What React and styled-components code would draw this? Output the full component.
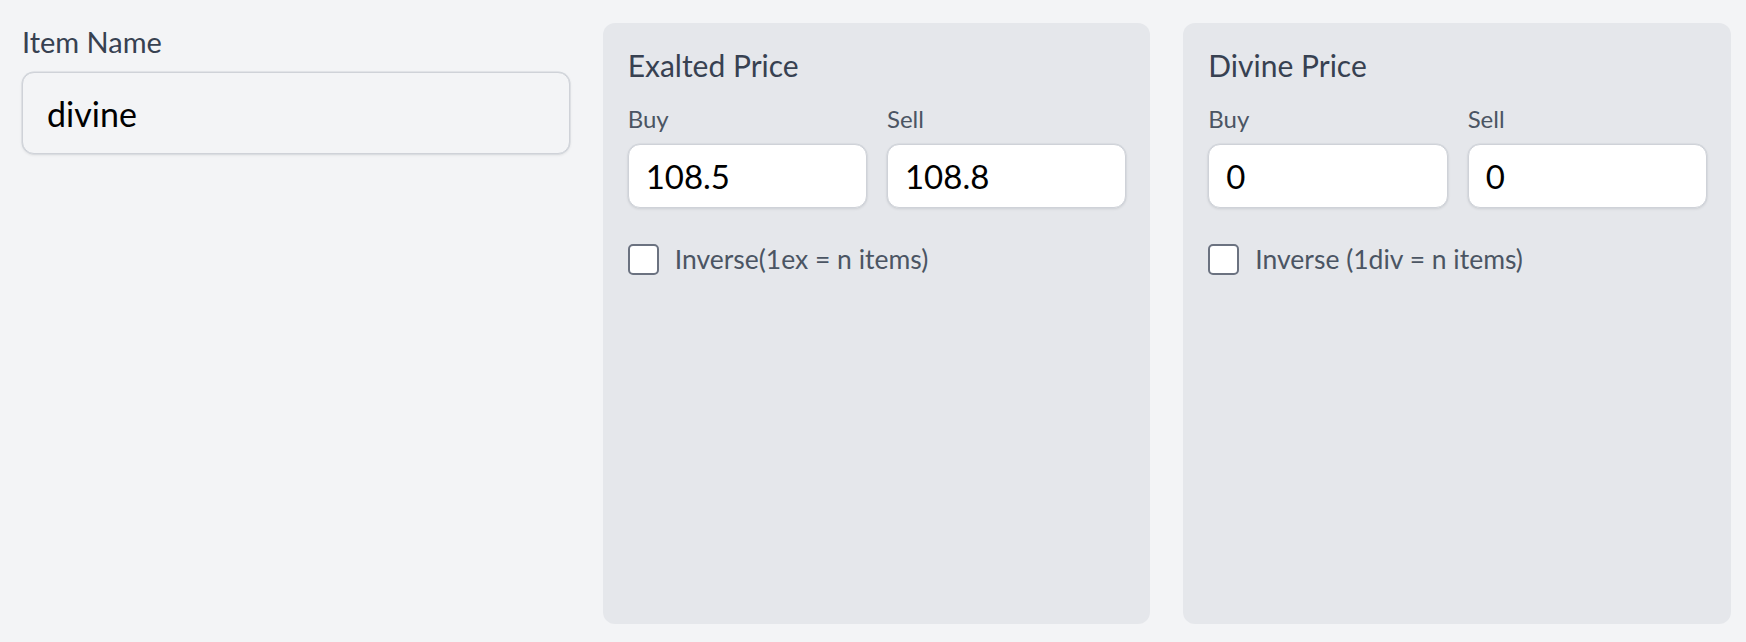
import React from 'react';
import styled, { createGlobalStyle } from 'styled-components';

const GlobalStyle = createGlobalStyle`
  html, body {
    margin: 0;
    padding: 0;
    background: #f3f4f6;
  }
  body {
    font-family: Lato, "Noto Sans", sans-serif;
  }
  * {
    box-sizing: border-box;
  }
`;

const Page = styled.div`
  display: grid;
  grid-template-columns: repeat(3, 1fr);
  gap: 33px;
  min-height: 100vh;
  padding: 23px 15px 18px 22px;
  background: #f3f4f6;
`;

const NameColumn = styled.div`
  display: flex;
  flex-direction: column;
  align-self: start;
`;

const FieldLabel = styled.label`
  font-size: 29px;
  line-height: 38px;
  color: #374151;
  margin-bottom: 11px;
`;

const NameInput = styled.input`
  height: 82px;
  width: 100%;
  padding: 0 24px;
  font-family: inherit;
  font-size: 34px;
  color: #000;
  background: #f3f4f6;
  border: 1px solid #cfd2d8;
  border-radius: 12px;
  box-shadow: 0 0 0 0.5px #d1d5db, 0 1px 3px rgba(0, 0, 0, 0.1);
  outline: none;
`;

const Panel = styled.section`
  display: flex;
  flex-direction: column;
  padding: 24px 24px 24px 25px;
  background: #e5e7eb;
  border-radius: 12px;
`;

const PanelTitle = styled.h2`
  margin: 0 0 19px;
  font-size: 30px;
  font-weight: 400;
  line-height: 37px;
  color: #374151;
`;

const PriceRow = styled.div`
  display: grid;
  grid-template-columns: 1fr 1fr;
  gap: 20px;
`;

const PriceField = styled.div`
  display: flex;
  flex-direction: column;
`;

const SmallLabel = styled.label`
  font-size: 24px;
  line-height: 32px;
  color: #4b5563;
  margin-bottom: 9px;
`;

const PriceInput = styled.input`
  height: 64px;
  width: 100%;
  padding: 0 17px;
  font-family: inherit;
  font-size: 33px;
  color: #000;
  background: #fff;
  border: 1px solid #cfd2d8;
  border-radius: 12px;
  box-shadow: 0 0 0 0.5px #d1d5db, 0 1px 3px rgba(0, 0, 0, 0.1);
  outline: none;
`;

const CheckRow = styled.label`
  display: flex;
  align-items: center;
  gap: 16px;
  margin-top: 35px;
  font-size: 26.5px;
  line-height: 32px;
  color: #4b5563;
`;

const Check = styled.input.attrs({ type: 'checkbox' })`
  appearance: none;
  margin: 0;
  width: 31px;
  height: 31px;
  flex: none;
  background: #fff;
  border: 2px solid #6b7280;
  border-radius: 5px;
`;

const PricePanel = ({ title, buy, sell, inverseLabel }) => (
  <Panel>
    <PanelTitle>{title}</PanelTitle>
    <PriceRow>
      <PriceField>
        <SmallLabel>Buy</SmallLabel>
        <PriceInput defaultValue={buy} />
      </PriceField>
      <PriceField>
        <SmallLabel>Sell</SmallLabel>
        <PriceInput defaultValue={sell} />
      </PriceField>
    </PriceRow>
    <CheckRow>
      <Check />
      {inverseLabel}
    </CheckRow>
  </Panel>
);

const App = () => (
  <>
    <GlobalStyle />
    <Page>
      <NameColumn>
        <FieldLabel>Item Name</FieldLabel>
        <NameInput defaultValue="divine" />
      </NameColumn>
      <PricePanel title="Exalted Price" buy="108.5" sell="108.8" inverseLabel="Inverse(1ex = n items)" />
      <PricePanel title="Divine Price" buy="0" sell="0" inverseLabel="Inverse (1div = n items)" />
    </Page>
  </>
);

export default App;
